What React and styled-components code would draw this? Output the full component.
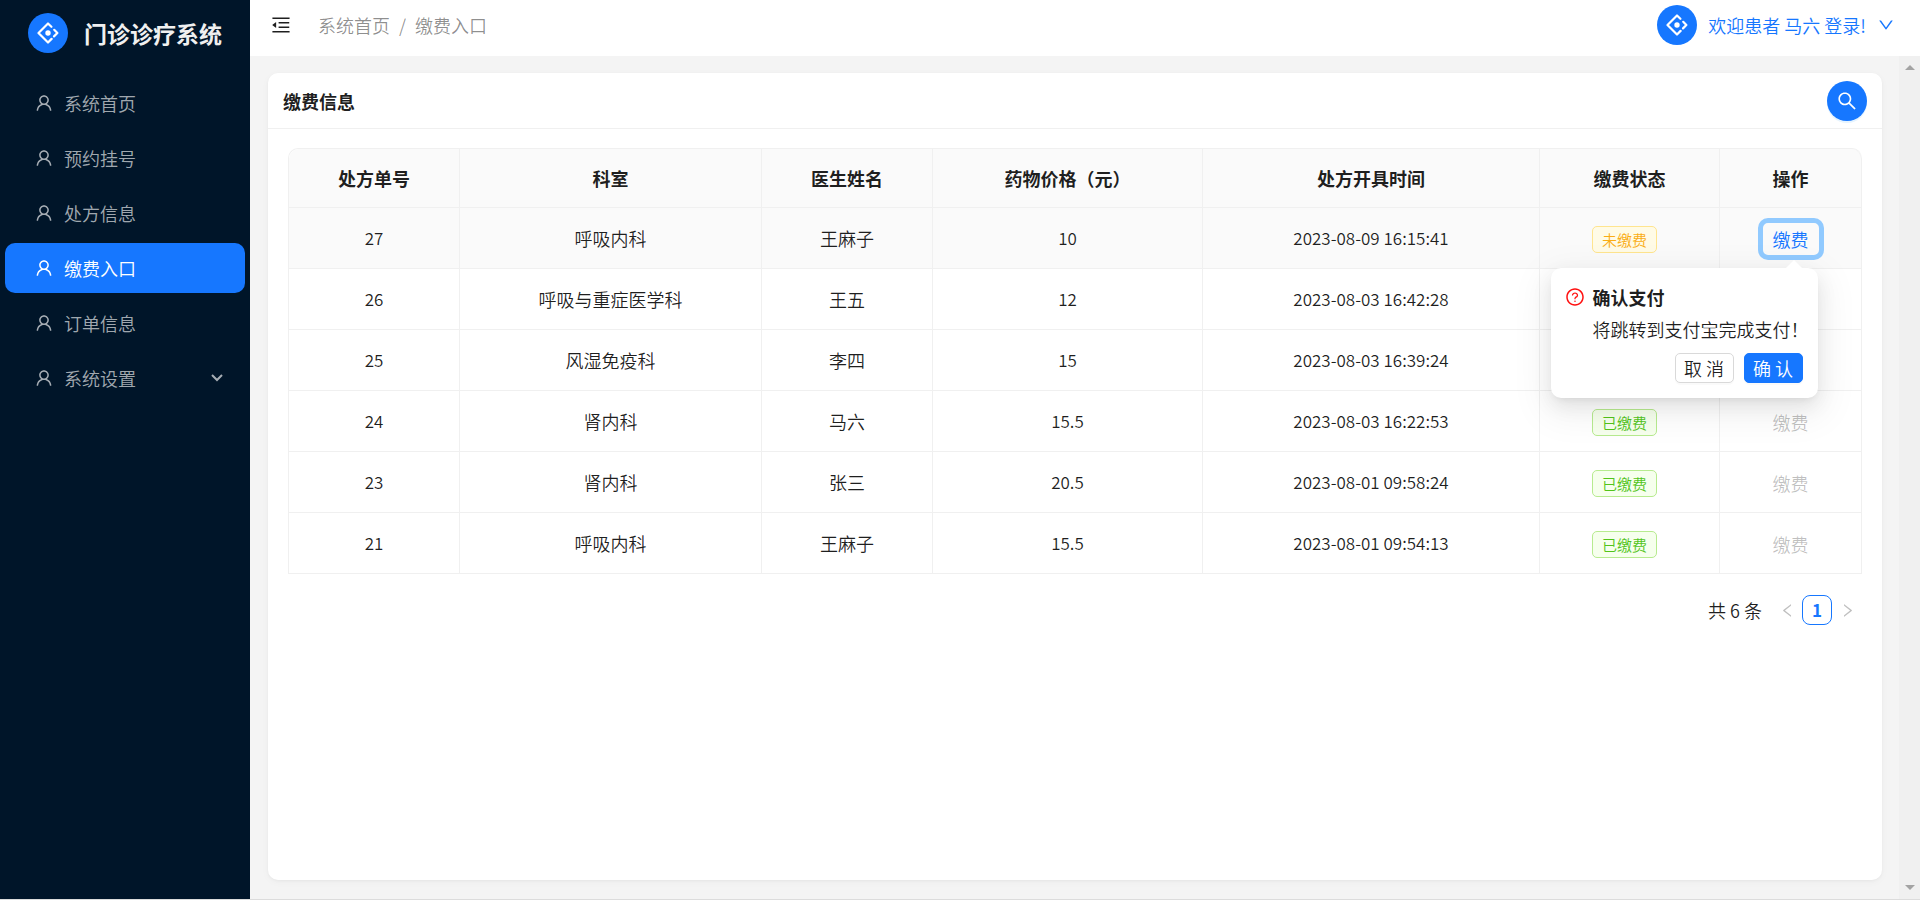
import React from "react";
import styled, { createGlobalStyle, css } from "styled-components";
import {
  AiOutlineUser,
  AiOutlineMenuFold,
  AiOutlineSearch,
  AiOutlineQuestionCircle,
  AiOutlineDown,
  AiOutlineLeft,
  AiOutlineRight,
} from "react-icons/ai";

const GlobalStyle = createGlobalStyle`
  *, *::before, *::after {
    box-sizing: border-box;
  }
  body {
    margin: 0;
    background: #dcdcdc;
    color: rgba(0, 0, 0, 0.88);
    font-family: "Noto Sans CJK SC", sans-serif;
    font-size: 18px;
    font-weight: 350;
    line-height: 28px;
  }
  button {
    margin: 0;
    padding: 0;
    border: 0;
    background: none;
    color: inherit;
    font: inherit;
    cursor: pointer;
  }
  a {
    color: inherit;
    text-decoration: none;
  }
  svg {
    display: block;
    flex: none;
  }
`;

const Shell = styled.div`
  display: flex;
  height: calc(100vh - 1px);
`;

const Sider = styled.aside`
  flex: 0 0 250px;
  background: #001529;
`;

const Brand = styled.div`
  display: flex;
  align-items: center;
  gap: 16px;
  padding: 13px 28px;
`;

const BrandName = styled.h1`
  margin: 0;
  color: #f0f0f0;
  font-size: 23px;
  line-height: 38px;
  font-weight: 700;
  white-space: nowrap;
`;

const LogoCircle = styled.span`
  display: flex;
  align-items: center;
  justify-content: center;
  flex: none;
  width: 40px;
  height: 40px;
  border-radius: 50%;
  background: #1677ff;
`;

const Menu = styled.nav`
  display: flex;
  flex-direction: column;
  gap: 5px;
  padding: 12px 5px;
`;

const itemStyle = css`
  display: flex;
  align-items: center;
  gap: 10px;
  height: 50px;
  padding: 0 22px 0 29px;
  border-radius: 10px;
  text-align: left;
  color: ${(p) => (p.$active ? "#fff" : "rgba(255, 255, 255, 0.65)")};
  background: ${(p) => (p.$active ? "#1677ff" : "transparent")};
`;

const MenuLink = styled.a`
  ${itemStyle}
`;

const MenuButton = styled.button`
  ${itemStyle}
`;

const MenuLabel = styled.span`
  flex: 1;
`;

const Layout = styled.div`
  flex: 1;
  min-width: 0;
  display: flex;
  flex-direction: column;
`;

const Header = styled.header`
  display: flex;
  align-items: center;
  height: 56px;
  padding: 0 25px 6px 20px;
  background: #fff;
`;

const Breadcrumb = styled.nav`
  display: flex;
  gap: 9px;
  margin-left: 26px;
  color: rgba(0, 0, 0, 0.45);
`;

const User = styled.button`
  display: flex;
  align-items: center;
  gap: 11px;
  margin-left: auto;
  color: #1677ff;
`;

const Body = styled.div`
  flex: 1;
  min-height: 0;
  display: flex;
  background: #f4f4f4;
`;

const Main = styled.main`
  flex: 1;
  min-width: 0;
  display: flex;
  padding: 17px 17px 19px 18px;
`;

const Scrollbar = styled.div`
  display: flex;
  flex-direction: column;
  justify-content: space-between;
  align-items: center;
  flex: 0 0 21px;
  padding: 9px 0;
  background: #f0f0f0;
`;

const Card = styled.section`
  flex: 1;
  min-width: 0;
  border-radius: 10px;
  background: #fff;
  box-shadow: 0 1px 3px rgba(0, 0, 0, 0.04), 0 2px 8px rgba(0, 0, 0, 0.03);
`;

const CardHead = styled.div`
  display: flex;
  align-items: center;
  justify-content: space-between;
  height: 56px;
  padding: 0 15px;
  border-bottom: 1px solid #f0f0f0;
`;

const CardTitle = styled.h2`
  margin: 0;
  font-size: 18px;
  font-weight: 700;
`;

const RoundButton = styled.button`
  display: flex;
  align-items: center;
  justify-content: center;
  width: 40px;
  height: 40px;
  border-radius: 50%;
  background: #1677ff;
  color: #fff;
  box-shadow: 0 2px 0 rgba(5, 145, 255, 0.1);
`;

const CardBody = styled.div`
  padding: 19px 20px;
`;

const Table = styled.table`
  width: 100%;
  table-layout: fixed;
  border-collapse: separate;
  border-spacing: 0;
  border: 1px solid #f0f0f0;
  border-width: 1px 0 0 1px;
  border-radius: 10px 10px 0 0;
  text-align: center;

  th,
  td {
    padding: 0;
    border: 1px solid #f0f0f0;
    border-width: 0 1px 1px 0;
  }
  th {
    height: 59px;
    background: #fafafa;
    font-weight: 700;
  }
  th:first-child {
    border-top-left-radius: 10px;
  }
  th:last-child {
    border-top-right-radius: 10px;
  }
`;

const Row = styled.tr`
  height: 61px;
  background: ${(p) => (p.$hover ? "#fafafa" : "#fff")};
`;

const NumberCell = styled.td`
  font-size: 17px;
`;

const Tag = styled.span`
  display: inline-block;
  margin-right: 10px;
  padding: 0 9px;
  border: 1px solid ${(p) => (p.$paid ? "#b7eb8f" : "#ffe58f")};
  border-radius: 5px;
  background: ${(p) => (p.$paid ? "#f6ffed" : "#fffbe6")};
  color: ${(p) => (p.$paid ? "#52c41a" : "#faad14")};
  font-size: 15px;
  line-height: 25px;
  vertical-align: middle;
`;

const PayCell = styled.div`
  position: relative;
  display: inline-block;
  vertical-align: middle;
`;

const PayButton = styled.button`
  display: block;
  height: 32px;
  padding: 0 10px;
  border-radius: 5px;
  color: #1677ff;
  line-height: 30px;
  outline: ${(p) => (p.$focused ? "5px solid #91caff" : "none")};

  &:disabled {
    color: rgba(0, 0, 0, 0.25);
    cursor: not-allowed;
  }
`;

const Popover = styled.div`
  position: absolute;
  z-index: 1;
  top: calc(100% + 13px);
  right: 1px;
  display: grid;
  grid-template-columns: 20px minmax(0, 1fr);
  column-gap: 8px;
  width: 267px;
  padding: 15px 15px 15px 14px;
  border-radius: 10px;
  background: #fff;
  text-align: left;
  box-shadow: 0 8px 20px rgba(0, 0, 0, 0.08), 0 4px 8px -5px rgba(0, 0, 0, 0.12),
    0 11px 35px 10px rgba(0, 0, 0, 0.05);

  &::before {
    content: "";
    position: absolute;
    right: 16px;
    bottom: 100%;
    border: 8px solid transparent;
    border-top-width: 0;
    border-bottom-color: #fff;
  }
`;

const PopIcon = styled.span`
  padding-top: 4px;
  color: #ff1010;
`;

const PopText = styled.p`
  grid-column: 2;
  margin: 0;
  padding-bottom: ${(p) => (p.$title ? "4px" : "10px")};
  font-weight: ${(p) => (p.$title ? 700 : 350)};
  white-space: nowrap;
`;

const PopActions = styled.div`
  grid-column: 1 / -1;
  display: flex;
  justify-content: flex-end;
  gap: 10px;
`;

const SmallButton = styled.button`
  width: 59px;
  height: 30px;
  border: 1px solid ${(p) => (p.$primary ? "#1677ff" : "#d9d9d9")};
  border-radius: 5px;
  background: ${(p) => (p.$primary ? "#1677ff" : "#fff")};
  color: ${(p) => (p.$primary ? "#fff" : "inherit")};
  box-shadow: 0 2px 0 rgba(0, 0, 0, 0.02);
  line-height: 26px;
`;

const Pagination = styled.div`
  display: flex;
  align-items: center;
  justify-content: flex-end;
  height: 30px;
  margin-top: 21px;
`;

const Total = styled.span`
  margin-right: 10px;
`;

const PageButton = styled.button`
  display: flex;
  align-items: center;
  justify-content: center;
  width: 30px;
  height: 30px;
  border-radius: 8px;
  border: 1px solid ${(p) => (p.$current ? "#1677ff" : "transparent")};
  color: ${(p) => (p.$current ? "#1677ff" : "rgba(0, 0, 0, 0.25)")};
  font-size: 17px;
  font-weight: ${(p) => (p.$current ? 700 : 400)};
`;

const menuItems = ["系统首页", "预约挂号", "处方信息", "缴费入口", "订单信息"];

const columns = [
  { title: "处方单号", width: 171 },
  { title: "科室", width: 302 },
  { title: "医生姓名", width: 171 },
  { title: "药物价格（元）", width: 270 },
  { title: "处方开具时间", width: 337 },
  { title: "缴费状态", width: 180 },
  { title: "操作", width: 142 },
];

const orders = [
  { id: 27, dept: "呼吸内科", doctor: "王麻子", price: 10, time: "2023-08-09 16:15:41", paid: false },
  { id: 26, dept: "呼吸与重症医学科", doctor: "王五", price: 12, time: "2023-08-03 16:42:28", paid: true },
  { id: 25, dept: "风湿免疫科", doctor: "李四", price: 15, time: "2023-08-03 16:39:24", paid: true },
  { id: 24, dept: "肾内科", doctor: "马六", price: 15.5, time: "2023-08-03 16:22:53", paid: true },
  { id: 23, dept: "肾内科", doctor: "张三", price: 20.5, time: "2023-08-01 09:58:24", paid: true },
  { id: 21, dept: "呼吸内科", doctor: "王麻子", price: 15.5, time: "2023-08-01 09:54:13", paid: true },
];

const Logo = () => (
  <LogoCircle>
    <svg
      width="22"
      height="22"
      viewBox="0 0 22 22"
      fill="none"
      stroke="#fff"
      strokeWidth="2.2"
      strokeLinecap="round"
      strokeLinejoin="round"
    >
      <path d="M14.4 4.8 11 1.5 1.5 11l9.5 9.5 3.600-3.600" />
      <path d="M17.2 7.8 20.4 11l-3.400 3.400" />
      <circle cx="11" cy="11" r="2.7" fill="#fff" stroke="none" />
    </svg>
  </LogoCircle>
);

const ConfirmPay = () => (
  <Popover role="dialog" aria-label="确认支付">
    <PopIcon>
      <AiOutlineQuestionCircle size={20} />
    </PopIcon>
    <PopText $title>确认支付</PopText>
    <PopText>将跳转到支付宝完成支付！</PopText>
    <PopActions>
      <SmallButton>取 消</SmallButton>
      <SmallButton $primary>确 认</SmallButton>
    </PopActions>
  </Popover>
);

const App = () => {
  return (
    <Shell>
      <GlobalStyle />
      <Sider>
        <Brand>
          <Logo />
          <BrandName>门诊诊疗系统</BrandName>
        </Brand>
        <Menu>
          {menuItems.map((name) => (
            <MenuLink href="#" key={name} $active={name === "缴费入口"}>
              <AiOutlineUser size={20} />
              <MenuLabel>{name}</MenuLabel>
            </MenuLink>
          ))}
          <MenuButton>
            <AiOutlineUser size={20} />
            <MenuLabel>系统设置</MenuLabel>
            <svg width="12" height="8" viewBox="0 0 12 8" fill="none" stroke="currentColor" strokeWidth="2">
              <path d="m1 1 5 5 5-5" />
            </svg>
          </MenuButton>
        </Menu>
      </Sider>
      <Layout>
        <Header>
          <button aria-label="收起菜单">
            <AiOutlineMenuFold size={22} />
          </button>
          <Breadcrumb>
            <span>系统首页</span>
            <span>/</span>
            <span>缴费入口</span>
          </Breadcrumb>
          <User>
            <Logo />
            <span>欢迎患者 马六 登录!</span>
            <AiOutlineDown size={18} />
          </User>
        </Header>
        <Body>
          <Main>
            <Card>
              <CardHead>
                <CardTitle>缴费信息</CardTitle>
                <RoundButton aria-label="搜索">
                  <AiOutlineSearch size={22} />
                </RoundButton>
              </CardHead>
              <CardBody>
                <Table>
                  <colgroup>
                    {columns.map((c) => (
                      <col key={c.title} width={c.width} />
                    ))}
                  </colgroup>
                  <thead>
                    <tr>
                      {columns.map((c) => (
                        <th key={c.title}>{c.title}</th>
                      ))}
                    </tr>
                  </thead>
                  <tbody>
                    {orders.map((o) => (
                      <Row key={o.id} $hover={!o.paid}>
                        <NumberCell>{o.id}</NumberCell>
                        <td>{o.dept}</td>
                        <td>{o.doctor}</td>
                        <NumberCell>{o.price}</NumberCell>
                        <NumberCell>{o.time}</NumberCell>
                        <td>
                          <Tag $paid={o.paid}>{o.paid ? "已缴费" : "未缴费"}</Tag>
                        </td>
                        <td>
                          <PayCell>
                            <PayButton disabled={o.paid} $focused={!o.paid}>
                              缴费
                            </PayButton>
                            {!o.paid && <ConfirmPay />}
                          </PayCell>
                        </td>
                      </Row>
                    ))}
                  </tbody>
                </Table>
                <Pagination>
                  <Total>共 6 条</Total>
                  <PageButton disabled aria-label="上一页">
                    <AiOutlineLeft size={17} />
                  </PageButton>
                  <PageButton $current>1</PageButton>
                  <PageButton disabled aria-label="下一页">
                    <AiOutlineRight size={17} />
                  </PageButton>
                </Pagination>
              </CardBody>
            </Card>
          </Main>
          <Scrollbar>
            <svg width="10" height="5" fill="#a3a3a3">
              <path d="M0 5 5 0l5 5z" />
            </svg>
            <svg width="10" height="5" fill="#a3a3a3">
              <path d="M0 0h10L5 5z" />
            </svg>
          </Scrollbar>
        </Body>
      </Layout>
    </Shell>
  );
};

export default App;
